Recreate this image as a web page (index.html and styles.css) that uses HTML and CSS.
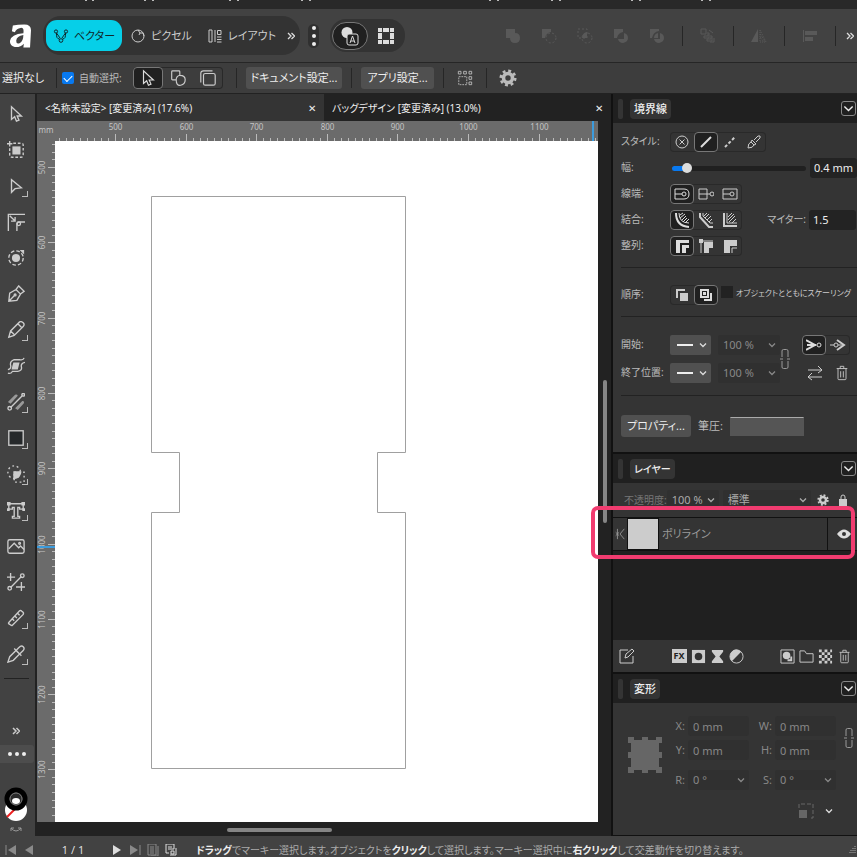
FILE: index.html
```html
<!DOCTYPE html>
<html lang="ja">
  <head>
    <meta charset="UTF-8" />
    <meta name="viewport" content="width=device-width, initial-scale=1.0" />
    <title>バッグデザイン</title>
    <link rel="stylesheet" href="styles.css" />
  </head>
  <body>
    <!-- Shared icons -->
    <svg class="defs" aria-hidden="true">
      <symbol id="chevron" viewBox="0 0 8 8"><path d="M1 2.500l3 3 3-3" /></symbol>
      <symbol id="more" viewBox="0 0 8 8"><path d="M1 1l3 3-3 3M4.500 1l3 3-3 3" /></symbol>
      <symbol id="pointer" viewBox="0 0 20 20"><path d="M5 2v14l3.500-3 2 5 2.800-1.200-2-4.600h4.700z" /></symbol>
      <symbol id="gear" viewBox="0 0 20 20">
        <circle cx="10" cy="10" r="5" stroke-width="4" />
        <circle cx="10" cy="10" r="8" stroke-width="3" stroke-dasharray="3.200 3.080" />
      </symbol>
      <symbol id="trash" viewBox="0 0 14 18">
        <path d="M1 4h12M5 4V1.500h4V4M2.500 4v11.500q0 1 1 1h7q1 0 1-1V4M5.500 7v7M8.500 7v7" />
      </symbol>
      <symbol id="link" viewBox="0 0 10 22">
        <path d="M2 9V3q0-1.500 1.500-1.500h3Q8 1.500 8 3v6M2 13v6q0 1.500 1.500 1.500h3Q8 20.500 8 19v-6M0 11h3M7 11h3" />
      </symbol>
    </svg>

    <div class="menubar">
      <svg width="720" height="2" aria-hidden="true">
        <path d="M85 .5h2m5 0h2m50 0h2m6 0h2m75 0h2m6 0h2m62 0h2m6 0h2m178 0h2m6 0h2m52 0h2m6 0h2m70 0h2m6 0h2m60 0h2m6 0h2" />
      </svg>
    </div>

    <header class="toolbar">
      <svg class="logo" viewBox="0 0 22 24" aria-label="Affinity">
        <path class="solid" d="M3 1Q8 0 15 0q7 0 7 6l-1 18h-7l.500-4Q11 24 5 23.500-.500 22 0 17 1 10 14 9q1-6-3-5.500Q7 4 5 8L2 7zM14 11q-7 1-7.500 6 0 4 3.500 2.500 4-2 4-8.500z" />
      </svg>
      <nav class="personas">
        <button class="persona selected">
          <svg class="icon" viewBox="0 0 16 16"><path d="M3.500 5q-.500 6 3 6M12.500 5q.500 6-3 6M3.500 5L7 10M12.500 5L9 10" /><circle cx="3" cy="3.500" r="1.600" /><circle cx="13" cy="3.500" r="1.600" /><circle cx="8" cy="12.500" r="1.800" /></svg>
          ベクター
        </button>
        <button class="persona">
          <svg class="icon" viewBox="0 0 16 16"><circle cx="8" cy="8" r="6" /><path d="M8 2l2 3h3l1 3M10 5l-1 2" /></svg>
          ピクセル
        </button>
        <button class="persona">
          <svg class="icon" viewBox="0 0 16 16"><path d="M2 2h3v12H2zM8 2v12M10.500 2.500H14v4h-3.500zM10 9h4.500M10 11.500h4.500M10 14h4.500" /></svg>
          レイアウト
        </button>
        <button class="more-button" aria-label="その他"><svg class="small"><use href="#more" /></svg></button>
      </nav>
      <button class="dots" aria-label="オプション"><i></i><i></i><i></i></button>
      <div class="modes">
        <button class="mode selected" aria-label="テキスト">
          <svg viewBox="0 0 20 20"><circle class="solid" cx="7" cy="6.500" r="5.500" /><rect class="dark" x="7" y="8" width="11" height="11" rx="2" /><path d="M10 17l2.500-7 2.500 7M11 15h3" /></svg>
        </button>
        <button class="mode" aria-label="グリッド">
          <svg viewBox="0 0 20 20"><path class="solid" d="M2 2h4v4H2zM7 2h6v4H7zM14 2h4v4h-4zM2 7h4v6H2zM14 7h4v6h-4zM2 14h4v4H2zM7 14h6v4H7zM14 14h4v4h-4z" /></svg>
        </button>
      </div>
      <div class="operations">
        <button aria-label="追加"><svg viewBox="0 0 16 16"><path class="solid" d="M1 1h9v4q5 0 5 5t-5 5-5-5H1z" /></svg></button>
        <button aria-label="削除"><svg viewBox="0 0 16 16"><path class="solid" d="M1 1h9v3q-5 1-6 6H1z" /><circle cx="10" cy="10" r="5" stroke-dasharray="2 2" /></svg></button>
        <button aria-label="交差"><svg viewBox="0 0 16 16"><path d="M1 1h9v9H1z" stroke-dasharray="2 2" /><circle cx="10" cy="10" r="5" stroke-dasharray="2 2" /><path class="solid" d="M10 4v6H5q0-5 5-6z" /></svg></button>
        <button aria-label="分割"><svg viewBox="0 0 16 16"><path class="solid" d="M1 1h9v3q-5 1-6 6H1zM11 5q4 1 4 5t-5 5q-4 0-5-4h6z" /></svg></button>
        <button aria-label="結合"><svg viewBox="0 0 16 16"><path class="solid" d="M1 1h9v2q-6 1-7 7H1zM11 5q4 1 4 5t-5 5q-4 0-5-4h6zM9 5v5H5q0-4 4-5z" /></svg></button>
        <span class="divider"></span>
        <button aria-label="順序"><svg viewBox="0 0 16 16"><path d="M1 1h5v5H1zM8 4v4H4v2h5V5M11 7v4H7v2h5V8M14 10v4h-4M9 2l4 3" /></svg></button>
        <span class="divider"></span>
        <button aria-label="反転"><svg viewBox="0 0 16 16"><path class="solid" d="M7 1v13H0z" /><path d="M9 2v12h6zM9 6l5 7M9 9l4 5" stroke-dasharray="1 1" /></svg></button>
        <span class="divider"></span>
        <button aria-label="整列"><svg viewBox="0 0 16 16"><path class="solid" d="M1 2h1v12H1zM3 3h12v4H3zM3 9h8v4H3z" /></svg></button>
        <span class="divider"></span>
        <button class="bright" aria-label="その他"><svg class="small"><use href="#more" /></svg></button>
      </div>
    </header>

    <div class="context">
      <span class="selection">選択なし</span>
      <span class="divider"></span>
      <input type="checkbox" id="auto" class="check" checked />
      <label for="auto">自動選択:</label>
      <div class="segments wide">
        <button class="selected" aria-label="移動"><svg class="icon"><use href="#pointer" /></svg></button>
        <button aria-label="グループ"><svg class="icon" viewBox="0 0 20 20"><path d="M3 3q0-1 1-1h7q1 0 1 1v4q-4 1-4 5H4q-1 0-1-1zM12 7q6 0 6 5t-5 6-5-6" /></svg></button>
        <button aria-label="レイヤー"><svg class="icon" viewBox="0 0 20 20"><rect x="5" y="5" width="13" height="13" rx="2" /><path d="M2 15V5q0-3 3-3h10" /></svg></button>
      </div>
      <span class="divider"></span>
      <button class="button doc-settings">ドキュメント設定...</button>
      <span class="divider"></span>
      <button class="button app-settings">アプリ設定...</button>
      <span class="divider"></span>
      <button class="plain" aria-label="変形の中心"><svg class="icon" viewBox="0 0 18 18"><path d="M1.500 1.500h3v3h-3zM7.500 1.500h3v3h-3zM13.500 1.500h3v3h-3zM13.500 7.500h3v3h-3zM13.500 13.500h3v3h-3z" /><path d="M2 7.500h9v9H2z" stroke-dasharray="2 1" /></svg></button>
      <span class="divider"></span>
      <button class="plain" aria-label="設定"><svg class="gear"><use href="#gear" /></svg></button>
    </div>

    <main class="workspace">
      <aside class="tools">
        <button aria-label="移動ツール"><svg viewBox="0 0 20 20"><use href="#pointer" /></svg></button>
        <button aria-label="アートボード"><svg viewBox="0 0 20 20"><path class="solid" d="M6 6h9v9H6z" /><path d="M7 2.500h9q2 0 2 2v11q0 2.500-2.500 2.500h-10Q3 18 3 15V8" stroke-dasharray="3 2" /><path d="M3 0v6M0 3h6" /></svg></button>
        <button class="sub" aria-label="ノード"><svg viewBox="0 0 20 20"><path d="M5 3v14l4-4 7-1z" /></svg></button>
        <button aria-label="コーナー"><svg viewBox="0 0 20 20"><path d="M1.500 20V1.500H20M3 3l6 6M4.500 9H9V4.500M11 20v-7q0-3 3-3h6" /><circle cx="13" cy="12" r="2" /></svg></button>
        <button aria-label="輪郭"><svg viewBox="0 0 20 20"><circle class="solid" cx="10" cy="10" r="4.500" /><circle cx="10" cy="10" r="8" stroke-dasharray="4 2.300" /><path class="solid" d="M14 1h5v5z" /></svg></button>
        <button aria-label="ペン"><svg viewBox="0 0 20 20"><path d="M2 18l1-9 7-4 5 5-4 7zM2 18l6-6M10 5l3-4 6 6-4 3" /><circle cx="9" cy="11" r="1" /></svg></button>
        <button class="sub" aria-label="鉛筆"><svg viewBox="0 0 20 20"><path d="M2 18l2-7L14 1q2-1 4 1t0 4L8 16zM4 11l4 4M12 3l4 4" /></svg></button>
        <button aria-label="ブレンド"><svg viewBox="0 0 20 20"><path class="solid" d="M7 6h7l-2 8H5z" /><path d="M1 14q4-1 3-5t4-6h6q4 1 5-2M1 18q4 1 5-2h6q5-1 4-5t4-5" /></svg></button>
        <button class="sub" aria-label="グラデーション"><svg viewBox="0 0 20 20"><path class="soft" d="M1 10L9 2q2-1 3 1l-8 9zM9 17l8-8q2-1 2 2l-7 8z" /><path d="M4 16L17 3" /><circle cx="3" cy="17" r="2" /><circle cx="18" cy="2" r="1.500" /></svg></button>
        <button class="sub" aria-label="長方形"><svg viewBox="0 0 20 20"><rect class="fill-dark" x="2" y="2" width="16" height="16" /></svg></button>
        <button class="sub" aria-label="シェイプビルダー"><svg viewBox="0 0 20 20"><circle cx="8" cy="8" r="7" stroke-dasharray="2 3" /><path d="M8 8h11v11H8z" stroke-dasharray="2 3" /><path class="solid" d="M7 7h9q0 8-9 9z" /></svg></button>
        <button class="sub" aria-label="テキスト"><svg viewBox="0 0 20 20"><path d="M2 3h16v6h-4V7h-2v10h2v2H6v-2h2V7H6v2H2z" /><path class="solid" d="M0 1h4v4H0zM16 1h4v4h-4zM0 8h3v3H0zM17 8h3v3h-3z" /></svg></button>
        <button aria-label="画像"><svg viewBox="0 0 20 20"><rect x="1" y="3" width="18" height="15" rx="2" /><path d="M2 13l6-6 5 5 2-2 4 4" /><circle cx="14" cy="7" r="1" /></svg></button>
        <button aria-label="切り抜き"><svg viewBox="0 0 20 20"><path d="M4 0v9M0 4.500h9M16 10v10M10 15.500h10M4 16L16 4" /><circle cx="3" cy="17" r="2" /><circle cx="17" cy="3" r="2" /></svg></button>
        <button class="sub" aria-label="定規"><svg viewBox="0 0 20 20"><path d="M2 15L14 2q1-1 3 1 2 1 1 3L6 18q-1 1-3-1-2-1-1-2zM6 11l2 2M9 8l2 2M12 5l2 2" /></svg></button>
        <button class="sub" aria-label="スポイト"><svg viewBox="0 0 20 20"><path d="M1 19l2-6 7-7 4 4-7 7zM8 4l8 8M10 6l3-3q3-3 5-1t0 4l-4 4" /></svg></button>
        <hr />
        <button class="tool-more" aria-label="その他"><svg class="small"><use href="#more" /></svg></button>
        <button class="tool-dots" aria-label="カスタマイズ"><i></i><i></i><i></i></button>
        <svg class="swatches" viewBox="0 0 34 60" aria-label="カラー">
          <circle cx="16" cy="37" r="11" fill="#fff" /><path d="M7 44l9-9" stroke="#e22" stroke-width="2" />
          <circle cx="16" cy="26" r="9" fill="#555" stroke="#000" stroke-width="5" />
          <circle cx="16" cy="26" r="6" fill="#2b2b2b" stroke="#777" /><ellipse cx="16" cy="28" rx="4" ry="3" fill="#fff" />
          <path d="M11 55q5 6 10 0M11 58v-3h3M21 58v-3h-3" fill="none" stroke="#999" />
        </svg>
      </aside>

      <section class="document">
        <div class="tabs">
          <div class="tab current">&lt;名称未設定&gt; [変更済み] (17.6%)<button aria-label="閉じる">✕</button></div>
          <div class="tab">バッグデザイン [変更済み] (13.0%)<button aria-label="閉じる">✕</button></div>
        </div>
        <div class="stage">
          <svg class="ruler-top" aria-hidden="true"></svg>
          <svg class="ruler-left" aria-hidden="true"></svg>
          <div class="canvas">
            <svg width="540" height="680" aria-label="ポリライン">
              <path d="M96.500 55.500h254v256h-28v60h28v256h-254v-256h28v-60h-28z" />
            </svg>
          </div>
          <div class="scroll-y"><span></span></div>
          <div class="scroll-x"><span></span></div>
        </div>
      </section>

      <aside class="panels">
        <section class="panel stroke-panel">
          <header><i></i><h2>境界線</h2><button aria-label="閉じる"><svg class="small"><use href="#chevron" /></svg></button></header>
          <div class="stroke-body">
            <div class="row">
              <span class="name">スタイル:</span>
              <div class="segments">
                <button aria-label="なし"><svg viewBox="0 0 16 16"><circle cx="8" cy="8" r="6" /><path d="M5.500 5.500l5 5M10.500 5.500l-5 5" /></svg></button>
                <button class="selected" aria-label="実線"><svg viewBox="0 0 16 16"><path d="M3 13L13 3" stroke-width="2" /></svg></button>
                <button aria-label="破線"><svg viewBox="0 0 16 16"><path d="M3 13L13 3" stroke-width="2" stroke-dasharray="3 2" /></svg></button>
                <button aria-label="ブラシ"><svg viewBox="0 0 16 16"><path d="M2 14q0-5 3-6l3 3q-1 3-6 3zM5 8l3 3 2-1-4-4zM8 6l4-4q3-1 2 2l-4 4" /></svg></button>
              </div>
            </div>
            <div class="row">
              <label class="name" for="width">幅:</label>
              <input type="range" id="width" min="0" max="100" value="8" />
              <input type="text" class="field value" aria-label="幅の値" value="0.4 mm" />
            </div>
            <div class="row">
              <span class="name">線端:</span>
              <div class="segments">
                <button class="selected" aria-label="丸"><svg viewBox="0 0 16 16"><path d="M1 3h9q5 0 5 5t-5 5H1zM1 8h7" /><circle cx="10" cy="8" r="2" /></svg></button>
                <button aria-label="バット"><svg viewBox="0 0 16 16"><path d="M1 3h8v10H1zM1 8h11" /><circle cx="14" cy="8" r="2" /></svg></button>
                <button aria-label="四角"><svg viewBox="0 0 16 16"><path d="M1 3h14v10H1zM1 8h7" /><circle cx="10" cy="8" r="2" /></svg></button>
              </div>
            </div>
            <div class="row">
              <span class="name">結合:</span>
              <div class="segments">
                <button class="selected" aria-label="丸結合"><svg viewBox="0 0 16 16"><path d="M2 1q0 13 13 14" stroke-width="2" /><path d="M5 1q0 10 10 10M6 3l3-2M6 6l5-4M8 8l4-4M9 10l4-4M11 11l4-4" /></svg></button>
                <button aria-label="ベベル"><svg viewBox="0 0 16 16"><path d="M2 1v4l9 10h4" stroke-width="2" /><path d="M5 1v3l7 7h3M6 4l3-3M7 6l4-4M9 8l4-4M11 10l3-3" /></svg></button>
                <button aria-label="マイター"><svg viewBox="0 0 16 16"><path d="M2 1v13h13" stroke-width="2" /><path d="M5 1v10h10M6 5l4-4M6 8l6-6M7 10l6-6M10 11l4-4" /></svg></button>
              </div>
              <label class="miter" for="miter">マイター:</label>
              <input type="text" class="field value" id="miter" value="1.5" />
            </div>
            <div class="row">
              <span class="name">整列:</span>
              <div class="segments">
                <button class="selected" aria-label="中央"><svg viewBox="0 0 16 16"><path class="solid" d="M2 2h13v3H6v10H2z" /><path class="solid" d="M8 7h7v3h-3v5H8z" /></svg></button>
                <button aria-label="内側"><svg viewBox="0 0 16 16"><path class="solid" d="M6 4h9v6h-4v5H6z" /><path d="M3 15V3h12" /><path class="solid" d="M1 1h4v4H1z" /></svg></button>
                <button aria-label="外側"><svg viewBox="0 0 16 16"><path class="solid" d="M2 2h13v6H8v7H2z" /><path d="M10 15v-5h5" /></svg></button>
              </div>
            </div>
            <hr />
            <div class="row order">
              <span class="name">順序:</span>
              <div class="segments">
                <button aria-label="背面"><svg viewBox="0 0 16 16"><path class="solid" d="M6 6h8v8H6z" /><path d="M4 10H3V3h7v1" stroke-width="2" /></svg></button>
                <button class="selected" aria-label="前面"><svg viewBox="0 0 16 16"><path d="M3 3h7v7H3zM6 6h1v1H6zM13 6v7H6" stroke-width="2" /></svg></button>
              </div>
              <input type="checkbox" class="check" id="scale" />
              <label for="scale" class="scale">オブジェクトとともにスケーリング</label>
            </div>
            <hr class="close" />
            <div class="ends">
              <div>
                <div class="row tall">
                  <label class="name" for="start">開始:</label>
                  <span class="select ending"><select id="start"><option></option></select><b></b><svg class="small"><use href="#chevron" /></svg></span>
                  <span class="select percent"><select aria-label="開始サイズ"><option>100 %</option></select><svg class="small"><use href="#chevron" /></svg></span>
                </div>
                <div class="row tall">
                  <label class="name" for="end">終了位置:</label>
                  <span class="select ending"><select id="end"><option></option></select><b></b><svg class="small"><use href="#chevron" /></svg></span>
                  <span class="select percent"><select aria-label="終了サイズ"><option>100 %</option></select><svg class="small"><use href="#chevron" /></svg></span>
                </div>
              </div>
              <svg class="link"><use href="#link" /></svg>
              <div class="end-actions">
                <div class="segments">
                  <button class="selected" aria-label="線上に配置"><svg viewBox="0 0 16 16"><path d="M0 3l9 5-9 5M1 8h9" stroke-width="2" /><circle cx="13" cy="8" r="2" /></svg></button>
                  <button aria-label="線端に配置"><svg viewBox="0 0 16 16"><path d="M7 3l7 5-7 5" stroke-width="2" /><path d="M0 8h4M8 8h5" /><circle cx="6" cy="8" r="2" /></svg></button>
                </div>
                <div class="end-icons">
                  <button class="plain" aria-label="入れ替え"><svg viewBox="0 0 16 16"><path d="M1 5h14M11 1l4 4-4 3M15 12H1M5 8l-4 4 4 3" /></svg></button>
                  <button class="plain" aria-label="削除"><svg><use href="#trash" /></svg></button>
                </div>
              </div>
            </div>
            <hr class="close" />
            <div class="properties">
              <button class="button">プロパティ...</button>
              <span>筆圧:</span>
              <button class="pressure" aria-label="筆圧"></button>
            </div>
          </div>
        </section>

        <section class="panel layer-panel">
          <header><i></i><h2>レイヤー</h2><button aria-label="閉じる"><svg class="small"><use href="#chevron" /></svg></button></header>
          <div class="blend">
            <label for="opacity">不透明度:</label>
            <span class="select opacity"><select id="opacity"><option>100 %</option></select><svg class="small"><use href="#chevron" /></svg></span>
            <span class="select mode-select"><select aria-label="描画モード"><option>標準</option></select><svg class="small"><use href="#chevron" /></svg></span>
            <button class="plain" aria-label="設定"><svg><use href="#gear" /></svg></button>
            <button class="plain" aria-label="ロック"><svg viewBox="0 0 12 12"><path class="solid" d="M2 5h8v7H2z" /><path d="M4 5V3q0-2 2-2t2 2v2" /></svg></button>
          </div>
          <div class="layer">
            <svg class="curve" viewBox="0 0 12 14"><path d="M3 1v12M1 5l4 4M1 9l4-4M11 1L6 7l5 6" /></svg>
            <span class="thumb"></span>
            <span class="layer-name">ポリライン</span>
            <button class="plain" aria-label="表示"><svg viewBox="0 0 14 10"><path class="solid" d="M0 5q7-9 14 0-7 9-14 0z" /><circle cx="7" cy="5" r="2" class="hole" /></svg></button>
            <span class="highlight"></span>
          </div>
          <div class="layer-empty"></div>
          <div class="layer-actions">
            <button aria-label="編集"><svg viewBox="0 0 16 16"><path d="M9 2H1v13h13V8M6 10l1-4 6-5 2 2-6 6z" /></svg></button>
            <span class="middle">
              <button class="fx" aria-label="エフェクト">FX</button>
              <button aria-label="マスク"><svg viewBox="0 0 16 16"><path class="solid" d="M1 1h14v14H1z" /><circle class="hole" cx="8" cy="8" r="4" /></svg></button>
              <button aria-label="フィルター"><svg viewBox="0 0 16 16"><path class="solid" d="M2 1h12v2l-4 5 4 5v2H2v-2l4-5-4-5z" /></svg></button>
              <button aria-label="調整"><svg viewBox="0 0 16 16"><circle cx="8" cy="8" r="7" /><path class="solid" d="M13 3L3 13Q-1 8 3 3t10 0z" /></svg></button>
            </span>
            <span class="middle">
              <button aria-label="塗りレイヤー"><svg viewBox="0 0 16 16"><path d="M1 1h14v14H1z" /><circle class="solid" cx="7" cy="7" r="4" /><path class="solid" d="M8 11h3V8h2v5H8z" /></svg></button>
              <button aria-label="グループ"><svg viewBox="0 0 16 16"><path d="M1 14V2h5l2 3h7v9z" /></svg></button>
              <button aria-label="ピクセル"><svg viewBox="0 0 16 16"><path d="M1 2h14M1 8h14M1 14h14" stroke-width="3" stroke-dasharray="3 3" /><path d="M4 5h12M4 11h12" stroke-width="3" stroke-dasharray="3 3" /></svg></button>
              <button aria-label="削除"><svg><use href="#trash" /></svg></button>
            </span>
          </div>
        </section>

        <section class="panel transform-panel">
          <header><i></i><h2>変形</h2><button aria-label="閉じる"><svg class="small"><use href="#chevron" /></svg></button></header>
          <div class="transform">
            <svg class="anchor" viewBox="0 0 34 36"><path d="M3 3h28v30H3zM0 0h6v6H0zM14 0h6v6h-6zM28 0h6v6h-6zM0 15h6v6H0zM28 15h6v6h-6zM0 30h6v6H0zM14 30h6v6h-6zM28 30h6v6h-6z" /></svg>
            <div class="fields">
              <label for="x">X:</label><input type="text" class="field" id="x" value="0 mm" />
              <label for="w">W:</label><input type="text" class="field" id="w" value="0 mm" />
              <label for="y">Y:</label><input type="text" class="field" id="y" value="0 mm" />
              <label for="h">H:</label><input type="text" class="field" id="h" value="0 mm" />
              <label for="r" class="angle">R:</label><span class="select angle"><select id="r"><option>0 °</option></select><svg class="small"><use href="#chevron" /></svg></span>
              <label for="s" class="angle">S:</label><span class="select angle"><select id="s"><option>0 °</option></select><svg class="small"><use href="#chevron" /></svg></span>
            </div>
            <svg class="link"><use href="#link" /></svg>
          </div>
          <div class="scale-mode">
            <svg class="icon" viewBox="0 0 16 16"><path class="solid" d="M1 7h8v8H1z" /><path d="M1 5V1h14v14h-4" stroke-dasharray="4 2" /></svg>
            <button class="plain" aria-label="メニュー"><svg class="small"><use href="#chevron" /></svg></button>
          </div>
        </section>
      </aside>
    </main>

    <footer class="status">
      <button class="dim" aria-label="最初"><svg viewBox="0 0 12 12"><path d="M1 1v10" /><path class="solid" d="M11 1v10L3 6z" /></svg></button>
      <button class="dim" aria-label="前"><svg viewBox="0 0 12 12"><path class="solid" d="M10 1v10L2 6z" /></svg></button>
      <span class="page">1 / 1</span>
      <button aria-label="次"><svg viewBox="0 0 12 12"><path class="solid" d="M2 1v10l8-5z" /></svg></button>
      <button class="dim" aria-label="最後"><svg viewBox="0 0 12 12"><path d="M11 1v10" /><path class="solid" d="M1 1v10l8-5z" /></svg></button>
      <button class="dim" aria-label="ページ"><svg viewBox="0 0 12 12"><path d="M1 0h8v11H1zM3 3h4M3 5h4M3 7h4M3 9h4M11 2v10H4" /></svg></button>
      <button aria-label="プレビュー"><svg viewBox="0 0 12 12"><path d="M1 0h8v5H3M1 0v9h3M11 4v7H5M3 3h4M6 7h3v3H6z" /></svg></button>
      <p><b>ドラッグ</b>でマーキー選択します。オブジェクトを<b>クリック</b>して選択します。マーキー選択中に<b>右クリック</b>して交差動作を切り替えます。</p>
      <svg class="grip" viewBox="0 0 8 8"><path d="M6 0v8M4 2v6M2 4v4M0 6v2" stroke-dasharray="1 1" /></svg>
    </footer>
    <script src="script.js"></script>
  </body>
</html>
```

FILE: styles.css
```css
* {
  box-sizing: border-box;
}

body {
  margin: 0;
  height: 100vh;
  display: flex;
  flex-direction: column;
  overflow: hidden;
  background: #222;
  color: #bbb;
  font-family: "Noto Sans", "Noto Sans CJK JP", sans-serif;
  font-size: 11px;
  line-height: 16px;
  font-feature-settings: "palt";
  white-space: nowrap;
}

button,
input,
select {
  font: inherit;
  font-feature-settings: inherit;
  color: inherit;
  border: 0;
  margin: 0;
  padding: 0;
  background: none;
}

button {
  display: flex;
  align-items: center;
  justify-content: center;
  flex: none;
}

svg {
  display: block;
  flex: none;
  width: 16px;
  height: 16px;
  fill: none;
  stroke: currentColor;
}

.defs {
  position: absolute;
  width: 0;
  height: 0;
}

.solid {
  fill: currentColor;
  stroke: none;
}

.hole {
  fill: #333;
  stroke: none;
}

.small {
  width: 8px;
  height: 8px;
  stroke-width: 1.3;
}

hr {
  border: 0;
  border-top: 1px solid #222;
  margin: 8px 0 13px;
}

.divider {
  flex: none;
  width: 1px;
  height: 20px;
  background: #262626;
}

/* Top bars */
.menubar {
  flex: none;
  height: 9px;
  background: #292929;
}

.menubar svg {
  width: 720px;
  height: 2px;
}

.toolbar {
  flex: none;
  height: 54px;
  padding: 0 3px 0 10px;
  display: flex;
  align-items: center;
  background: #424242;
  border-bottom: 1px solid #262626;
}

.logo {
  width: 21px;
  height: 24px;
  color: #fff;
}

.personas {
  width: 257px;
  height: 39px;
  margin-left: 12px;
  padding: 0 1px 0 3px;
  display: flex;
  align-items: center;
  border-radius: 18px;
  background: #333;
}

.persona {
  width: 78px;
  height: 31px;
  gap: 5px;
  color: #ccc;
}

.persona:nth-child(3) {
  flex: 1;
}

.persona.selected {
  width: 76px;
  border-radius: 11px;
  background: #06cfe8;
  color: #10282c;
}

.more-button {
  width: 16px;
  color: #ddd;
}

.dots {
  width: 11px;
  height: 24px;
  margin: 0 11px 0 8px;
  flex-direction: column;
  gap: 4px;
  border-radius: 6px;
  background: #303030;
}

.dots i,
.tool-dots i {
  width: 4px;
  height: 4px;
  border-radius: 2px;
  background: #eee;
}

.modes {
  width: 75px;
  height: 33px;
  padding: 0 2px;
  display: flex;
  align-items: center;
  border-radius: 16px;
  background: #333;
  color: #ddd;
}

.mode {
  width: 36px;
  height: 28px;
  border-radius: 14px;
}

.mode svg {
  width: 20px;
  height: 20px;
}

.mode.selected {
  background: #202020;
  border: 1px solid #777;
}

.mode .dark {
  fill: #202020;
}

.operations {
  flex: 1;
  margin-left: 100px;
  display: flex;
  align-items: center;
  gap: 17px;
  color: #595959;
}

.operations button:has(+ button) {
  margin-right: 3px;
}

.operations .bright {
  width: 8px;
  margin-left: -7px;
  color: #ddd;
}

.context {
  flex: none;
  height: 31px;
  padding-left: 2px;
  display: flex;
  align-items: center;
  background: #3d3d3d;
  border-bottom: 1px solid #222;
}

.selection {
  width: 54px;
  color: #eee;
}

.check {
  appearance: none;
  flex: none;
  width: 12px;
  height: 12px;
  background: #222;
}

.context .check {
  margin: 0 5px;
  display: grid;
  place-items: center;
  border-radius: 2px;
  background: #0879f0;
}

.check:checked::after {
  content: "";
  width: 7px;
  height: 4px;
  margin-bottom: 2px;
  border-left: 1px solid #fff;
  border-bottom: 1px solid #fff;
  transform: rotate(-45deg);
}

.context label {
  width: 54px;
  font-size: 10px;
}

.context > .segments {
  margin-right: 13px;
}

.segments {
  flex: none;
  display: flex;
  border-radius: 4px;
  box-shadow: inset 0 0 0 1px #292929;
  color: #ccc;
}

.segments button {
  width: 24px;
  height: 20px;
}

.segments.wide button {
  width: 30px;
  height: 22px;
}

.segments .selected {
  border: 1px solid #777;
  border-radius: 4px;
  background: #202020;
  color: #ddd;
}

.wide svg {
  width: 18px;
  height: 18px;
  stroke-width: 1.3;
}

.button {
  height: 22px;
  border-radius: 3px;
  background: #505050;
  color: #eee;
}

.context .button {
  margin: 0 9px;
}

.doc-settings {
  width: 96px;
}

.app-settings {
  width: 73px;
}

.context .plain {
  width: 42px;
  color: #bbb;
}

.gear {
  width: 18px;
  height: 18px;
}

/* Workspace */
.workspace {
  flex: 1;
  min-height: 0;
  display: flex;
}

.tools {
  flex: none;
  width: 37px;
  padding-top: 2px;
  background: #424242;
  border-right: 2px solid #222;
  color: #ccc;
}

.tools button {
  position: relative;
  width: 32px;
  height: 36px;
}

.tools svg {
  width: 18px;
  height: 18px;
  stroke-width: 1.5;
}

.tools .sub::after {
  content: "";
  position: absolute;
  right: 4px;
  bottom: 7px;
  width: 5px;
  height: 5px;
  border-right: 1px solid #bbb;
  border-bottom: 1px solid #bbb;
}

.tools .fill-dark {
  fill: #26292b;
}

.tools .soft {
  fill: #999;
  stroke: none;
}

.tools hr {
  width: 25px;
  margin: 6px 4px 43px;
}

.tools .tool-more {
  height: 18px;
}

.tools .small {
  width: 8px;
  height: 8px;
}

.tools .tool-dots {
  width: 34px;
  height: 18px;
  margin-top: 5px;
  gap: 3px;
  border-radius: 0 3px 3px 0;
  background: #4d4d4d;
}

.tools .swatches {
  width: 34px;
  height: 60px;
  margin-top: 10px;
  stroke: none;
  stroke-width: 1;
}

.document {
  flex: 1;
  min-width: 0;
  display: flex;
  flex-direction: column;
}

.tabs {
  flex: none;
  display: flex;
  height: 27px;
}

.tab {
  flex: 1;
  padding: 0 4px 0 8px;
  display: flex;
  align-items: center;
  justify-content: space-between;
  color: #eee;
  font-size: 10px;
}

.tab.current {
  background: #343434;
}

.tab button {
  width: 16px;
}

.stage {
  flex: 1;
  min-height: 0;
  display: grid;
  grid-template: 20px 1fr 14px / 18px 1fr 13px;
}

.ruler-top {
  grid-area: 1 / 1 / 2 / 3;
  width: 100%;
  height: 20px;
  background: #6b6b6b;
}

.ruler-left {
  grid-area: 2 / 1 / 3 / 2;
  width: 18px;
  height: 100%;
  background: #6b6b6b;
}

.stage text {
  fill: #c4c4c4;
  stroke: none;
  font-size: 8px;
  text-anchor: middle;
}

.stage .cursor {
  stroke: #3c9bdc;
  stroke-width: 2;
}

.canvas {
  grid-area: 2 / 2;
  overflow: hidden;
  background: #fff;
  color: #a0a0a0;
}

.canvas svg {
  width: 540px;
  height: 680px;
}

.scroll-y {
  grid-area: 2 / 3;
  padding: 239px 0 0 5px;
}

.scroll-y span {
  display: block;
  width: 4px;
  height: 143px;
  border-radius: 2px;
  background: #858585;
}

.scroll-x {
  grid-area: 3 / 2;
  padding: 6px 0 0 172px;
}

.scroll-x span {
  display: block;
  width: 105px;
  height: 4px;
  border-radius: 2px;
  background: #858585;
}

/* Panels */
.panels {
  flex: none;
  width: 246px;
  display: flex;
  flex-direction: column;
  border-left: 2px solid #111;
}

.panel {
  background: #343434;
  border-bottom: 2px solid #111;
}

.panel header {
  height: 29px;
  padding: 0 1px 0 5px;
  display: flex;
  align-items: center;
  background: #202020;
}

.panel header i {
  width: 5px;
  height: 20px;
  border-radius: 2px;
  background: #343434;
}

.panel h2 {
  margin: 0 auto 0 7px;
  padding: 2px 4px;
  border-radius: 4px;
  background: #343434;
  color: #eee;
  font-size: 11px;
  font-weight: 500;
}

.layer-panel h2 {
  font-size: 10px;
}

.panel header button {
  width: 15px;
  height: 15px;
  border: 1px solid #888;
  border-radius: 3px;
  color: #eee;
}

.panel header button svg {
  width: 11px;
  height: 11px;
  stroke-width: 1;
}

.stroke-body {
  height: 329px;
  padding: 6px 0 0 8px;
}

.row {
  height: 26px;
  display: flex;
  align-items: center;
}

.tall {
  height: 28px;
}

.name {
  flex: none;
  width: 49px;
  padding-bottom: 3px;
  font-size: 10px;
}

input[type="range"] {
  appearance: none;
  width: 134px;
  height: 5px;
  margin: 0 4px 0 2px;
  border-radius: 3px;
  background: linear-gradient(90deg, #0879f0 10%, #202020 10%);
}

input[type="range"]::-webkit-slider-thumb {
  appearance: none;
  width: 10px;
  height: 10px;
  border-radius: 5px;
  background: #ddd;
}

.field {
  min-width: 0;
  height: 20px;
  padding: 0 5px;
  border-radius: 3px;
  background: #303030;
}

.value {
  width: 47px;
  padding: 0 0 2px 4px;
  background: #232323;
  color: #eee;
}

.miter {
  width: 67px;
  text-align: right;
  padding: 0 3px 3px 0;
  font-size: 10px;
}

.order .check {
  margin: 0 3px 6px;
}

.scale {
  padding-bottom: 5px;
  color: #ccc;
  font-size: 8px;
}

hr.close {
  margin: 8px 0 14px;
}

.order {
  margin-top: 14px;
}

.ends {
  display: flex;
  align-items: center;
}

.select {
  position: relative;
  flex: none;
  height: 20px;
  border-radius: 2px;
  background: #303030;
}

.select select {
  appearance: none;
  width: 100%;
  height: 20px;
  padding-left: 5px;
}

.select svg {
  position: absolute;
  right: 4px;
  top: 6px;
  pointer-events: none;
}

.ending {
  width: 41px;
  background: #505050;
  color: #ddd;
}

.ending b {
  position: absolute;
  left: 7px;
  top: 9px;
  width: 16px;
  height: 2px;
  background: #eee;
}

.percent {
  width: 62px;
  margin-left: 7px;
  color: #888;
}

.link {
  width: 10px;
  height: 22px;
  color: #999;
}

.end-actions {
  margin-left: 12px;
  padding-top: 4px;
}

.end-icons {
  height: 28px;
  margin-top: 4px;
  padding-left: 5px;
  display: flex;
  align-items: center;
  justify-content: space-between;
  color: #ccc;
}

.properties {
  display: flex;
  align-items: center;
  gap: 7px;
  margin-top: 19px;
}

.properties .button {
  width: 70px;
}

.pressure {
  width: 74px;
  height: 19px;
  margin-left: auto;
  margin-right: 55px;
  padding: 0;
  border: 1px solid #555;
  border-top-color: #aaa;
  background: #555;
}

.blend {
  height: 34px;
  padding: 0 5px 0 11px;
  display: flex;
  align-items: center;
  color: #aaa;
}

.blend label {
  width: 49px;
  color: #777;
  font-size: 10px;
}

.opacity {
  width: 52px;
}

.mode-select {
  width: 88px;
  margin: 0 6px 0 4px;
}

.blend .plain {
  width: 12px;
  margin-right: 8px;
  color: #ccc;
}

.blend .plain svg {
  width: 12px;
  height: 12px;
}

.layer {
  position: relative;
  height: 34px;
  display: flex;
  align-items: center;
  border-top: 1px solid #111;
  border-bottom: 1px solid #111;
}

.curve {
  width: 14px;
  height: 12px;
  color: #999;
}

.thumb {
  width: 32px;
  height: 32px;
  border: 1px solid #111;
  background: #ccc;
}

.layer-name {
  flex: 1;
  padding-left: 3px;
  color: #999;
}

.layer .plain {
  width: 30px;
  height: 32px;
  padding-left: 2px;
  border-left: 1px solid #111;
  color: #ddd;
}

.layer .plain svg {
  width: 14px;
  height: 10px;
}

.highlight {
  position: absolute;
  left: -22px;
  right: 2px;
  top: -12px;
  height: 53px;
  border: 4px solid #f13c70;
  border-radius: 7px;
  pointer-events: none;
}

.layer-empty {
  height: 89px;
  background: #202020;
}

.layer-actions {
  height: 32px;
  padding: 0 5px 0 6px;
  display: flex;
  align-items: center;
  justify-content: space-between;
  color: #ccc;
}

.middle {
  display: flex;
  gap: 4px;
}

.layer-actions .middle button {
  width: 15px;
}

.middle svg {
  width: 15px;
  height: 15px;
}

.layer-actions .fx {
  height: 14px;
  background: #ccc;
  color: #222;
  font-size: 9px;
  font-weight: bold;
}

.transform-panel {
  flex: 1;
  border-bottom: 1px solid #111;
  color: #888;
}

.transform {
  padding: 13px 3px 0 15px;
  display: flex;
}

.anchor {
  width: 34px;
  height: 36px;
  margin: 21px 11px 0 0;
  fill: #666;
  stroke: none;
}

.fields {
  display: grid;
  grid-template-columns: 15px 61px 26px 61px;
  row-gap: 4px;
}

.fields label {
  padding: 2px 3px 0 0;
  text-align: right;
}

.fields label.angle {
  padding-top: 8px;
}

.fields .select.angle {
  margin-top: 6px;
}

.fields .field {
  width: 61px;
}

.transform .link {
  margin: 11px 0 0 8px;
}

.scale-mode {
  display: flex;
  justify-content: flex-end;
  align-items: center;
  gap: 11px;
  margin: 13px 24px 0 0;
  color: #666;
}

.scale-mode .plain {
  color: #ddd;
}

.status {
  flex: none;
  height: 21px;
  padding: 7px 0 0 2px;
  display: flex;
  align-items: center;
  background: #424242;
  color: #aaa;
  overflow: hidden;
}

.status button {
  width: 18px;
  height: 14px;
  color: #ddd;
}

.status svg {
  width: 12px;
  height: 12px;
}

.status .dim {
  color: #8a8a8a;
}

.page {
  width: 70px;
  text-align: center;
  color: #ddd;
}

.status p {
  margin: 0 auto 0 16px;
  font-size: 10px;
}

.status b {
  color: #eee;
}

.status .grip {
  width: 8px;
  height: 8px;
}
```

FILE: script.js
```js
// Ruler ticks: one every 10 mm, a long one with a label every 100 mm
const zoomX = 0.706;
const zoomY = 0.753;

function drawTop() {
  const ruler = document.querySelector(".ruler-top");
  const width = ruler.getBoundingClientRect().width;
  let out = '<text x="9" y="12">mm</text>';
  for (let mm = 420; ; mm += 10) {
    const x = Math.round(78 + (mm - 500) * zoomX) + 0.5;
    if (x > width) break;
    const major = mm % 100 === 0;
    out += `<path d="M${x} 20v${major ? -7 : -3}" />`;
    if (major && x < width - 10) out += `<text x="${x}" y="9">${mm}</text>`;
  }
  out += '<path class="cursor" d="M556 0v20" />';
  ruler.innerHTML = out;
}

function drawLeft() {
  const ruler = document.querySelector(".ruler-left");
  const height = ruler.getBoundingClientRect().height;
  let out = "";
  for (let mm = 470; ; mm += 10) {
    const y = Math.round(26 + (mm - 500) * zoomY) + 0.5;
    if (y > height) break;
    const major = mm % 100 === 0;
    out += `<path d="M18 ${y}h${major ? -7 : -3}" />`;
    if (major && y < height - 10) out += `<text transform="translate(8 ${y}) rotate(-90)">${mm}</text>`;
  }
  out += '<path class="cursor" d="M0 406h18" />';
  ruler.innerHTML = out;
}

drawTop();
drawLeft();
```
